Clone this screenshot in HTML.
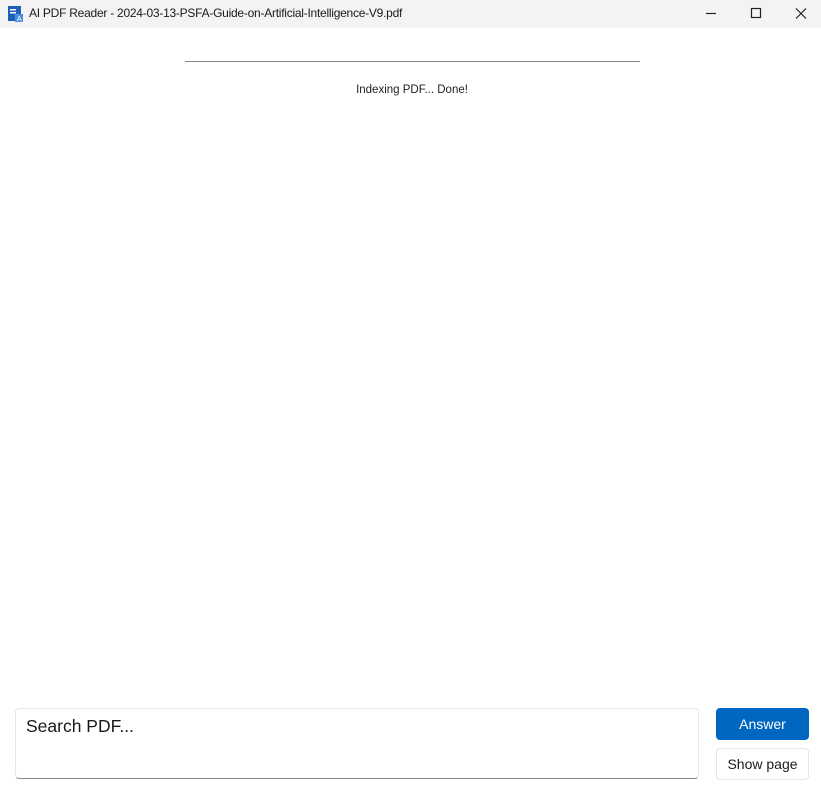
<!DOCTYPE html>
<html><head><meta charset="utf-8"><style>
body{margin:0;width:821px;height:787px;background:#fff;font-family:"Liberation Sans",sans-serif;position:relative;overflow:hidden}
.tb{position:absolute;left:0;top:0;width:821px;height:28px;background:#f3f3f3}
.title{position:absolute;left:29px;top:6px;font-size:12px;letter-spacing:-0.25px;color:#1a1a1a}
.abs{position:absolute}
</style></head><body>
<div class="tb">
<svg class="abs" style="left:8px;top:6px" width="15" height="16"><rect x="0" y="0" width="13" height="15" fill="#1f5fb5"/><rect x="2" y="3" width="6" height="1.5" fill="#fff"/><rect x="2" y="6" width="6" height="1.5" fill="#fff"/><rect x="7" y="8" width="8" height="8" fill="#4a90e2"/><text x="9" y="15" font-size="7" fill="#fff" font-family="Liberation Sans">A</text></svg>
<div class="title">AI PDF Reader - 2024-03-13-PSFA-Guide-on-Artificial-Intelligence-V9.pdf</div>
<svg class="abs" style="left:700px;top:6px" width="110" height="16" stroke="#222" stroke-width="1.2" fill="none"><line x1="6" y1="7.5" x2="16" y2="7.5"/><rect x="51.5" y="2.5" width="9" height="9"/><path d="M96 2.5 L106 12.5 M106 2.5 L96 12.5"/></svg>
</div>
<div class="abs" style="left:185px;top:61px;width:455px;height:1px;background:#8a8a8a"></div>
<div class="abs" style="left:0;top:84px;width:824px;text-align:center;font-size:11.5px;color:#222">Indexing PDF... Done!</div>
<div class="abs" style="left:15px;top:708px;width:682px;height:69px;border:1px solid #e5e5e5;border-bottom:1px solid #8a8a8a;border-radius:4px"></div>
<div class="abs" style="left:26px;top:716px;font-size:17.5px;color:#1a1a1a">Search PDF...</div>
<div class="abs" style="left:716px;top:708px;width:93px;height:32px;background:#0067c0;border-radius:4px;color:#fff;font-size:14px;text-align:center;line-height:32px">Answer</div>
<div class="abs" style="left:716px;top:748px;width:91px;height:30px;border:1px solid #e5e5e5;border-radius:4px;color:#1a1a1a;font-size:14px;text-align:center;line-height:30px">Show page</div>
</body></html>
